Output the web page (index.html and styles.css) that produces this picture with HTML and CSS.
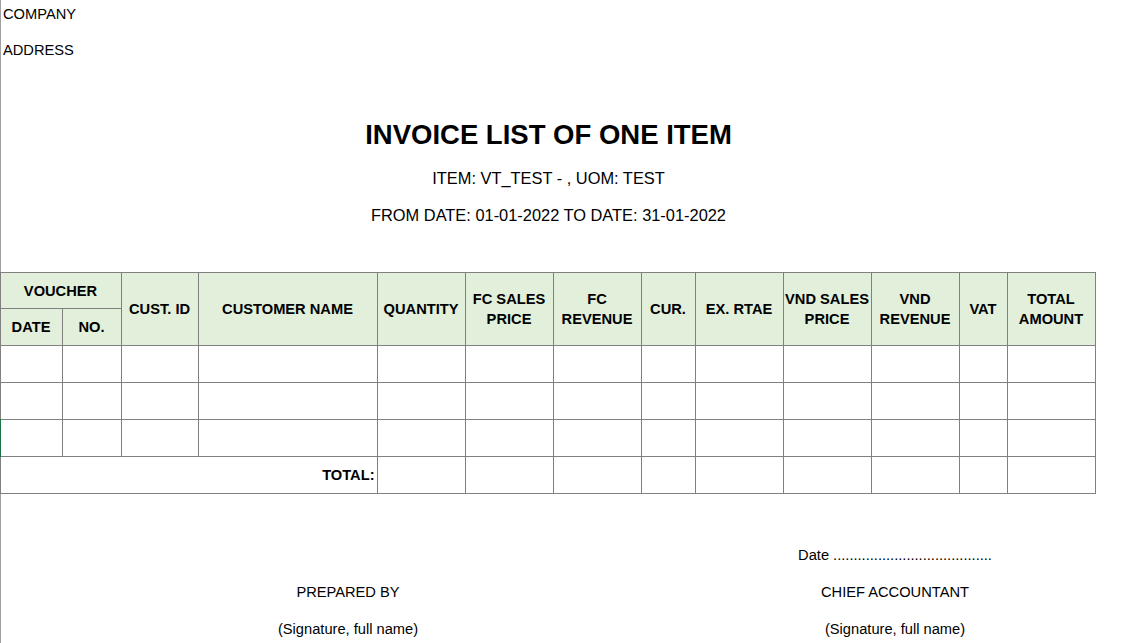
FILE: index.html
```html
<!DOCTYPE html>
<html lang="en">
  <head>
    <meta charset="UTF-8" />
    <meta name="viewport" content="width=device-width, initial-scale=1.0" />
    <title>Invoice list of one item</title>

    <link rel="stylesheet" href="styles.css">
  </head>
  <body>
    <div class="sheet">
      <div class="company">COMPANY</div>
      <div class="address">ADDRESS</div>

      <div class="heading">
        <h1 class="title">INVOICE LIST OF ONE ITEM</h1>
        <p class="sub item">ITEM: VT_TEST - , UOM: TEST</p>
        <p class="sub range">FROM DATE: 01-01-2022 TO DATE: 31-01-2022</p>
      </div>

      <table class="report">
        <colgroup>
          <col class="c-date" />
          <col class="c-no" />
          <col class="c-cust" />
          <col class="c-name" />
          <col class="c-wide" />
          <col class="c-wide" />
          <col class="c-wide" />
          <col class="c-cur" />
          <col class="c-wide" />
          <col class="c-wide" />
          <col class="c-wide" />
          <col class="c-vat" />
          <col class="c-wide" />
        </colgroup>
        <thead>
          <tr class="h1">
            <th colspan="2">VOUCHER</th>
            <th rowspan="2">CUST. ID</th>
            <th rowspan="2">CUSTOMER NAME</th>
            <th rowspan="2">QUANTITY</th>
            <th rowspan="2">FC SALES<br />PRICE</th>
            <th rowspan="2">FC<br />REVENUE</th>
            <th rowspan="2">CUR.</th>
            <th rowspan="2">EX. RTAE</th>
            <th rowspan="2">VND SALES<br />PRICE</th>
            <th rowspan="2">VND<br />REVENUE</th>
            <th rowspan="2">VAT</th>
            <th rowspan="2">TOTAL<br />AMOUNT</th>
          </tr>
          <tr class="h2">
            <th>DATE</th>
            <th>NO.</th>
          </tr>
        </thead>
        <tbody>
          <tr>
            <td></td><td></td><td></td><td></td><td></td><td></td><td></td>
            <td></td><td></td><td></td><td></td><td></td><td></td>
          </tr>
          <tr>
            <td></td><td></td><td></td><td></td><td></td><td></td><td></td>
            <td></td><td></td><td></td><td></td><td></td><td></td>
          </tr>
          <tr>
            <td class="active"></td><td></td><td></td><td></td><td></td><td></td><td></td>
            <td></td><td></td><td></td><td></td><td></td><td></td>
          </tr>
          <tr class="total">
            <td colspan="4" class="total-label">TOTAL:</td>
            <td></td><td></td><td></td><td></td><td></td><td></td><td></td><td></td><td></td>
          </tr>
        </tbody>
      </table>

      <div class="signs">
        <div class="sign">
          <div class="sign-line"></div>
          <div class="sign-line">PREPARED BY</div>
          <div class="sign-line">(Signature, full name)</div>
        </div>
        <div class="sign">
          <div class="sign-line">Date .......................................</div>
          <div class="sign-line">CHIEF ACCOUNTANT</div>
          <div class="sign-line">(Signature, full name)</div>
        </div>
      </div>
    </div>
  </body>
</html>
```

FILE: styles.css
```css
*,
*::before,
*::after {
  box-sizing: border-box;
  margin: 0;
  padding: 0;
}

body {
  font-family: "Liberation Sans", Arial, sans-serif;
  font-size: 14.67px;
  color: #000;
  background: #fff;
}

.sheet {
  border-left: 1px solid #a0a0a0;
  min-height: 100vh;
  width: 1146px;
}

.company {
  height: 28px;
  line-height: 28px;
  padding-left: 2px;
}

.address {
  height: 44px;
  line-height: 44px;
  padding-left: 2px;
}

.heading {
  width: 1095px;
  text-align: center;
  height: 200px;
  padding-top: 46px;
}

.title {
  font-size: 27.5px;
  font-weight: bold;
  line-height: 34px;
}

.sub {
  font-size: 16.4px;
  line-height: 20px;
}

.item {
  margin-top: 16px;
}

.range {
  margin-top: 17px;
}

.report {
  border-collapse: collapse;
  table-layout: fixed;
  width: 1095px;
  margin-left: -2px;
}

.c-date { width: 62px; }
.c-no { width: 59px; }
.c-cust { width: 77px; }
.c-name { width: 179px; }
.c-wide { width: 88px; }
.c-cur { width: 54px; }
.c-vat { width: 48px; }

.report th,
.report td {
  border: 1px solid #808080;
  height: 37px;
}

.report th {
  background: #e2efda;
  font-weight: bold;
  font-size: 14.67px;
  line-height: 20px;
  text-align: center;
  vertical-align: middle;
}

.report .h1 th {
  height: 36px;
}

.report td.active {
  border-left: 2px solid #1e7145;
}

.total-label {
  text-align: right;
  font-weight: bold;
  padding-right: 2px;
}

.signs {
  display: grid;
  grid-template-columns: 694px 400px;
  padding-top: 43px;
}

.sign {
  text-align: center;
}

.sign-line {
  height: 37px;
  line-height: 37px;
}
```
